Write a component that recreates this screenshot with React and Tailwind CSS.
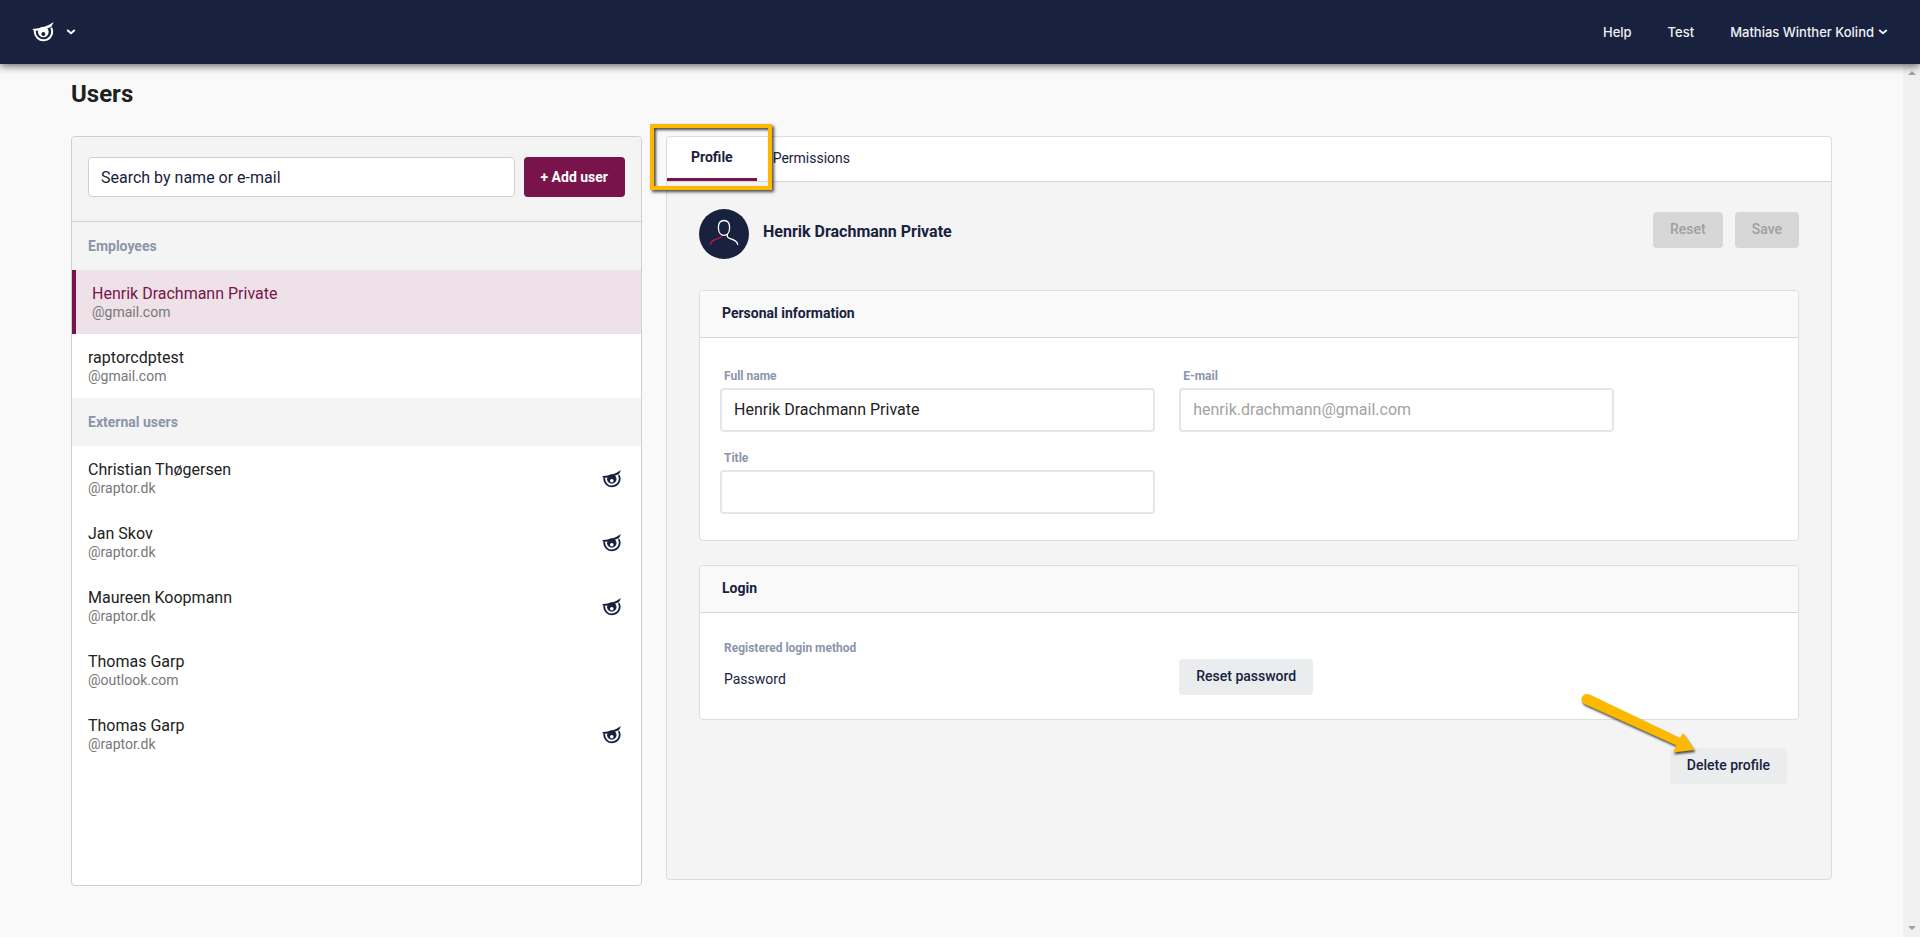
import React, { useState } from 'react'
import clsx from 'clsx'

const EMPLOYEES = [
  { id: 1, name: 'Henrik Drachmann Private', mail: '@gmail.com' },
  { id: 2, name: 'raptorcdptest', mail: '@gmail.com' },
]

const EXTERNAL_USERS = [
  { id: 3, name: 'Christian Thøgersen', mail: '@raptor.dk', raptor: true },
  { id: 4, name: 'Jan Skov', mail: '@raptor.dk', raptor: true },
  { id: 5, name: 'Maureen Koopmann', mail: '@raptor.dk', raptor: true },
  { id: 6, name: 'Thomas Garp', mail: '@outlook.com' },
  { id: 7, name: 'Thomas Garp', mail: '@raptor.dk', raptor: true },
]

export default function App() {
  const [selectedId, setSelectedId] = useState(1)

  return (
    <div className="flex min-h-screen flex-col bg-[#f9f9f9] font-[Roboto,sans-serif] text-[#18223e]">
      <TopBar />
      <div className="flex flex-1">
        <main className="min-w-0 flex-1 px-[71px] pt-3.5">
          <h1 className="text-2xl leading-8 font-bold text-[#1d2120]">Users</h1>
          <div className="mt-[26px] grid grid-cols-3 items-start gap-6">
            <UserList selectedId={selectedId} onSelect={setSelectedId} />
            <UserDetails />
          </div>
        </main>
        <ScrollTrack />
      </div>
    </div>
  )
}

// ── Top bar ────────────────────────────────────────────────────────────────────

function TopBar() {
  return (
    <header className="z-10 flex h-16 items-center justify-between bg-[#18223e] pr-8 pl-8 shadow-[0_2px_8px_rgba(0,0,0,0.6)]">
      <button className="flex items-center gap-3 text-white" aria-label="Switch product">
        <RaptorEye className="h-5 w-[22px]" />
        <Chevron />
      </button>
      <nav className="flex items-center gap-9 font-[Inter,sans-serif] text-[13px] leading-5 font-medium text-[#f0f1f4]">
        <a href="#help">Help</a>
        <a href="#test">Test</a>
        <button className="flex items-center gap-1">
          Mathias Winther Kolind
          <Chevron />
        </button>
      </nav>
    </header>
  )
}

// ── User list ──────────────────────────────────────────────────────────────────

function UserList({ selectedId, onSelect }) {
  return (
    <section className="min-h-[750px] overflow-hidden rounded border border-[#cfcfcf] bg-white">
      <div className="flex gap-[9px] border-b border-[#d2d2d2] bg-[#f4f4f4] px-4 pt-5 pb-6">
        <input
          type="text"
          aria-label="Search users"
          placeholder="Search by name or e-mail"
          className="h-10 min-w-0 flex-1 rounded border border-[#cfcfcf] bg-white px-3 text-base outline-none placeholder:text-[#18223e]"
        />
        <button className="h-10 rounded bg-[#78144b] px-[17px] text-sm font-bold text-white">+ Add user</button>
      </div>
      <UserGroup title="Employees" users={EMPLOYEES} selectedId={selectedId} onSelect={onSelect} />
      <UserGroup title="External users" users={EXTERNAL_USERS} selectedId={selectedId} onSelect={onSelect} />
    </section>
  )
}

function UserGroup({ title, users, selectedId, onSelect }) {
  return (
    <div>
      <h2 className="flex h-12 items-center bg-[#f4f4f4] px-4 text-sm font-bold text-[#8c95ab]">{title}</h2>
      <ul>
        {users.map((user) => {
          const selected = user.id === selectedId
          return (
            <li key={user.id}>
              <button
                onClick={() => onSelect(user.id)}
                className={clsx(
                  'flex h-16 w-full items-center justify-between px-4 text-left',
                  selected ? 'border-l-4 border-[#78144b] bg-[#eee2e8] text-[#78144b]' : 'text-[#222]'
                )}
              >
                <span>
                  <span className="block text-base leading-5">{user.name}</span>
                  <span className="block text-sm leading-4 text-[#777]">{user.mail}</span>
                </span>
                {user.raptor && <RaptorEye className="mt-0.5 mr-1 h-[18px] w-[19px] text-[#18223e]" />}
              </button>
            </li>
          )
        })}
      </ul>
    </div>
  )
}

// ── User details ───────────────────────────────────────────────────────────────

function UserDetails() {
  return (
    <section className="col-span-2 min-h-[744px] rounded border border-[#dcdcdc] bg-[#f4f4f4]">
      {/* Tabs */}
      <div role="tablist" className="flex h-[45px] rounded-t border-b border-[#d6d6d6] bg-white text-sm">
        <div className="relative">
          <button
            role="tab"
            aria-selected="true"
            className="h-full border-b-3 border-[#78144b] px-6 pb-0.5 font-bold"
          >
            Profile
          </button>
          <div className="pointer-events-none absolute -top-[13px] -left-[17px] h-[66px] w-[122px] border-4 border-[#fcb900] shadow-[2px_2px_3px_rgba(0,0,0,0.7),inset_2px_2px_3px_rgba(0,0,0,0.7)]" />
        </div>
        <button role="tab" aria-selected="false" className="px-4 pb-0.5">
          Permissions
        </button>
      </div>

      <div className="px-8 pt-[27px]">
        {/* Name row */}
        <div className="flex items-start justify-between">
          <div className="flex items-center gap-3.5">
            <Avatar />
            <h2 className="pb-1 text-base font-bold">Henrik Drachmann Private</h2>
          </div>
          <div className="flex gap-3 pt-[3px]">
            <Button disabled>Reset</Button>
            <Button disabled>Save</Button>
          </div>
        </div>

        <Card title="Personal information" className="mt-[31px]">
          <div className="grid grid-cols-[42.6%_42.6%] gap-y-[17px] pt-[29px] pb-[26px] pl-5">
            <Field id="full-name" label="Full name" defaultValue="Henrik Drachmann Private" />
            <Field id="email" label="E-mail" defaultValue="henrik.drachmann@gmail.com" disabled />
            <Field id="title" label="Title" />
          </div>
        </Card>

        <Card title="Login" className="mt-6">
          <div className="grid grid-cols-[42.6%_42.6%] pt-[26px] pb-6 pl-5">
            <div className="pl-1">
              <p className="text-xs leading-[18px] font-bold text-[#8c95ab]">Registered login method</p>
              <p className="mt-3 text-sm leading-5">Password</p>
            </div>
            <div className="pt-5">
              <Button>Reset password</Button>
            </div>
          </div>
        </Card>

        <div className="mt-7 mr-3 flex justify-end">
          <div className="relative">
            <Button>Delete profile</Button>
            <PointerArrow />
          </div>
        </div>
      </div>
    </section>
  )
}

function Card({ title, className, children }) {
  return (
    <section className={clsx('rounded border border-[#dedede] bg-white', className)}>
      <h3 className="flex h-[47px] items-center rounded-t border-b border-[#d6d6d6] bg-[#f9f9f9] px-[22px] pb-0.5 text-sm font-bold">
        {title}
      </h3>
      {children}
    </section>
  )
}

function Field({ id, label, ...rest }) {
  return (
    <div className="pr-6">
      <label htmlFor={id} className="block pl-1 text-xs leading-[18px] font-bold text-[#8c95ab]">
        {label}
      </label>
      <input
        id={id}
        type="text"
        className="mt-[3px] block h-11 w-full rounded border-2 border-[#e6e6e6] bg-white px-3 pb-0.5 text-base text-[#222] outline-none disabled:text-[#a3a3a3]"
        {...rest}
      />
    </div>
  )
}

function Button({ children, disabled }) {
  return (
    <button
      disabled={disabled}
      className="block h-9 rounded bg-[#ebecee] px-[17px] pb-0.5 text-sm font-medium disabled:bg-[#d7d7d7] disabled:text-[#a0a0a0]"
    >
      {children}
    </button>
  )
}

// ── Drawings ───────────────────────────────────────────────────────────────────

function RaptorEye({ className }) {
  return (
    <svg viewBox="0 0 64 60" className={className} fill="currentColor" aria-hidden="true">
      <path d="M0 21Q38 19 64 0L57 14Q34 25 6 27Z" />
      <path d="M7.5 26A26 26 0 1 0 56.5 17" fill="none" stroke="currentColor" strokeWidth="6" />
      <path
        fillRule="evenodd"
        d="M17 30A16 16 0 1 0 49 30A16 16 0 1 0 17 30ZM27 36A6 6 0 1 1 39 36A6 6 0 1 1 27 36Z"
      />
    </svg>
  )
}

function Chevron() {
  return (
    <svg viewBox="0 0 10 6" className="h-1.5 w-2.5" fill="none" stroke="currentColor" strokeWidth="1.8" aria-hidden="true">
      <path d="M1.2 1L5 4.2L8.8 1" />
    </svg>
  )
}

function Avatar() {
  return (
    <svg viewBox="0 0 50 50" className="h-[50px] w-[50px]" fill="none" strokeWidth="1.3" strokeLinecap="round" aria-hidden="true">
      <circle cx="25" cy="25" r="25" fill="#18223e" />
      <path
        d="M25 11.5C28.6 11.5 30.6 14 30.6 18.4C30.6 23 28.4 26.3 25 26.3C21.6 26.3 19.4 23 19.4 18.4C19.4 14 21.4 11.5 25 11.5Z"
        stroke="#fff"
      />
      <path d="M28.3 25.3V27.2C28.3 28.4 29.3 28.8 30.6 29.3C35.5 30.8 38.3 32 38.7 35.3" stroke="#fff" />
      <path d="M22.4 27.2C21.8 28.8 20.6 29 19 29.5C14.5 31 12.2 31.8 11.4 35.3" stroke="#d0104f" />
    </svg>
  )
}

function PointerArrow() {
  return (
    <svg
      viewBox="0 0 120 72"
      className="pointer-events-none absolute -top-[59px] -left-[90px] h-[72px] w-[120px] drop-shadow-[1px_2px_1px_rgba(0,0,0,0.7)]"
      aria-hidden="true"
    >
      <path
        d="M9 5.3L100 49L103 44L114.5 61L93 63.5L96.5 56.5L5 15.3A5.3 5.3 0 0 1 9 5.3Z"
        fill="#fcb900"
      />
    </svg>
  )
}

function ScrollTrack() {
  return (
    <div className="flex w-[17px] flex-col items-center justify-between bg-[#f0f0f0] py-[7px]" aria-hidden="true">
      <svg viewBox="0 0 8 4" className="h-1 w-2">
        <path d="M0 4L4 0L8 4Z" fill="#a3a3a3" />
      </svg>
      <svg viewBox="0 0 8 4" className="h-1 w-2">
        <path d="M0 0L4 4L8 0Z" fill="#a3a3a3" />
      </svg>
    </div>
  )
}
